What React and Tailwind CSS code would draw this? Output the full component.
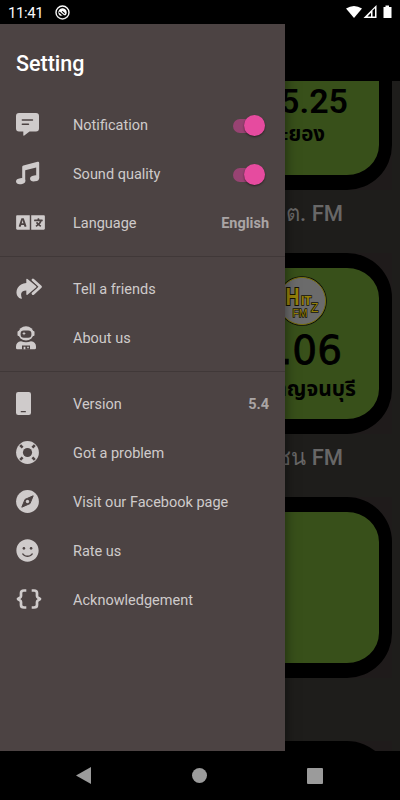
import React from 'react'
import { FaLanguage, FaSmile } from 'react-icons/fa'

const ChatIcon = () => (
  <svg width="23" height="23" viewBox="0 0 23 23" fill="currentColor">
    <path d="M3 0H20Q23 0 23 3V15.500Q23 18.500 20 18.500H13.500L8.300 22.600Q7.300 23.200 7.300 22V18.500H3Q0 18.500 0 15.500V3Q0 0 3 0Z" />
    <path d="M6.300 7H16.500M6.300 11.300H12.500" stroke="#4c4343" strokeWidth="1.400" strokeLinecap="round" />
  </svg>
)

const MusicIcon = () => (
  <svg width="24" height="24" viewBox="0 0 24 24" fill="currentColor" className="-mt-0.5">
    <path d="M6.200 6Q6.200 4.800 7.400 4.500L21.600 .700Q23.200 .400 23.200 1.900V17H20.200V6.400L9.200 9.300V19.800H6.200Z" />
    <ellipse cx="4.700" cy="20.200" rx="4.700" ry="3" transform="rotate(-8 4.700 20.200)" />
    <ellipse cx="18.600" cy="17.400" rx="4.600" ry="3" transform="rotate(-8 18.600 17.400)" />
  </svg>
)

const ShareIcon = () => (
  <svg width="27" height="22" viewBox="0 0 27 22" fill="currentColor">
    <path d="M17 2L24.500 8.700L17 15.600" fill="none" stroke="currentColor" strokeWidth="2.800" strokeLinejoin="round" strokeLinecap="round" />
    <path
      d="M10.300 1.300Q10.500 .200 11.500 .900L20 8Q20.900 8.800 20 9.600L11.500 16.700Q10.500 17.300 10.300 16.300V12.600Q6 12.800 5.200 15.600Q4.800 17.800 6 20.600Q3.500 21.300 1.400 17.900Q-.600 14 1.600 9.900Q4.300 5.600 10.300 5.100Z"
      stroke="#4c4343"
      strokeWidth="2"
      paintOrder="stroke"
    />
  </svg>
)

const AstronautIcon = () => (
  <svg width="20" height="24" viewBox="0 0 20 24" fill="currentColor">
    <ellipse cx="10" cy="7.400" rx="7.600" ry="7.200" />
    <rect x="1.500" y="5" width="17" height="5" rx="1" />
    <rect x="4.600" y="4.600" width="10.800" height="7.200" rx="3.200" fill="#4c4343" />
    <path d="M8 5.600L8.600 7L10 7.500L8.600 8.100L8 9.500L7.400 8.100L6 7.500L7.400 7Z" />
    <path d="M5 15.300Q10 17.300 15 15.300Q20 16 20 20.500V22Q20 23.300 18.600 23.300H1.400Q0 23.300 0 22V20.500Q0 16 5 15.300Z" />
    <path d="M6 23.500V19.500H14V23.500Z" fill="#4c4343" />
    <path d="M7.600 20.800H9.400V23.300H7.600ZM11.200 20.800H12.800V22.300H11.200Z" />
  </svg>
)

const PhoneIcon = () => (
  <svg width="15" height="23" viewBox="0 0 15 23">
    <rect width="15" height="23" rx="2.200" fill="currentColor" />
    <path d="M5.300 19.700H9.300" stroke="#4c4343" strokeWidth="1.300" strokeLinecap="round" />
  </svg>
)

const LifeRingIcon = () => (
  <svg width="23" height="23" viewBox="0 0 23 23">
    <circle cx="11.500" cy="11.500" r="11.400" fill="currentColor" />
    <circle cx="11.500" cy="11.500" r="4.600" fill="#4c4343" />
    <path d="M6.600 6.600L4.200 4.200M16.400 6.600L18.800 4.200M6.600 16.400L4.200 18.800M16.400 16.400L18.800 18.800" stroke="#4c4343" strokeWidth="2.600" />
  </svg>
)

const CompassIcon = () => (
  <svg width="23" height="23" viewBox="0 0 23 23">
    <circle cx="11.500" cy="11.500" r="11.400" fill="currentColor" />
    <path d="M17.200 5.800L14 13.600L5.800 17.200L9 9.400Z" fill="#4c4343" stroke="#4c4343" strokeLinejoin="round" />
    <circle cx="11.500" cy="11.500" r="1.700" fill="currentColor" />
  </svg>
)

const BracesIcon = () => (
  <svg width="26" height="20" viewBox="0 0 26 20" fill="none" stroke="currentColor" strokeWidth="2.700" strokeLinejoin="round" className="-mt-px">
    <path d="M10.300 1.500H8Q5 1.500 5 4V7Q5 8 4 8.700L2 10L4 11.300Q5 12 5 13V16Q5 18.500 8 18.500H10.300" />
    <path d="M15.700 1.500H18Q21 1.500 21 4V7Q21 8 22 8.700L24 10L22 11.300Q21 12 21 13V16Q21 18.500 18 18.500H15.700" />
  </svg>
)

const HitzLogo = () => (
  <svg width="50" height="50" viewBox="0 0 50 50" className="shrink-0" fontFamily="Liberation Sans, sans-serif" fontWeight="700">
    <circle cx="25" cy="25" r="24.800" fill="#0b0b0b" />
    <circle cx="25" cy="25" r="23.600" fill="#6b6b6b" stroke="#77700c" strokeWidth="1" />
    <g fill="#94800a" stroke="#151304" strokeWidth="1.400" paintOrder="stroke">
      <text x="8.500" y="28.800" fontSize="24" textLength="14" lengthAdjust="spacingAndGlyphs" strokeWidth="2.200">H</text>
      <text x="24" y="29" fontSize="13" textLength="10.500" lengthAdjust="spacingAndGlyphs">IT</text>
      <text x="34" y="36" fontSize="12" fontWeight="400">Z</text>
      <text x="15.500" y="41" fontSize="11.500" fontWeight="400" textLength="15" lengthAdjust="spacingAndGlyphs">FM</text>
    </g>
  </svg>
)

const sections = [
  [
    { icon: <ChatIcon />, label: 'Notification', toggle: true },
    { icon: <MusicIcon />, label: 'Sound quality', toggle: true },
    { icon: <FaLanguage className="h-[23px] w-[29px]" />, label: 'Language', value: 'English' },
  ],
  [
    { icon: <ShareIcon />, label: 'Tell a friends' },
    { icon: <AstronautIcon />, label: 'About us' },
  ],
  [
    { icon: <PhoneIcon />, label: 'Version', value: '5.4' },
    { icon: <LifeRingIcon />, label: 'Got a problem' },
    { icon: <CompassIcon />, label: 'Visit our Facebook page' },
    { icon: <FaSmile className="size-[23px]" />, label: 'Rate us' },
    { icon: <BracesIcon />, label: 'Acknowledgement' },
  ],
]

const Toggle = () => (
  <div className="mr-1 flex h-3.5 w-8 items-center justify-end rounded-full bg-[#974372]">
    <div className="size-[21px] shrink-0 rounded-full bg-[#e64b9f] shadow-[0_1px_2px_rgba(0,0,0,0.5)]" />
  </div>
)

const MenuRow = ({ icon, label, value, toggle }) => (
  <li className="flex h-[49px] items-center pr-4 pl-4 text-[#cfcbcb]">
    <span className="flex w-[57px] shrink-0 items-center pb-0.5">{icon}</span>
    <span className="flex-1 pt-px text-[14.5px] whitespace-nowrap">{label}</span>
    {value && <span className="pt-px text-[14.5px] font-bold text-[#aaa5a5]">{value}</span>}
    {toggle && <Toggle />}
  </li>
)

const StationCard = ({ label, children }) => (
  <div className="h-[244px] w-[181px] shrink-0">
    <div className="bg-[#1f1b1b]">
      <div className="flex h-[181px] flex-col items-end overflow-hidden rounded-[45px] border-x-[13px] border-y-[15px] border-black bg-[#38501a] font-['Noto_Sans','Noto_Sans_Thai',sans-serif] text-black">
        {children}
      </div>
    </div>
    {label && (
      <p className="pt-[11px] pr-[49px] text-right text-[22px] leading-[26px] font-medium whitespace-nowrap text-[#686767]">
        {label}
      </p>
    )}
  </div>
)

const App = () => (
  <div className="relative flex h-[800px] w-[400px] flex-col overflow-hidden bg-black font-[Roboto,sans-serif]">
    {/* Status bar */}
    <header className="flex h-6 shrink-0 items-center justify-between pr-2 pl-2 text-white">
      <div className="flex items-center gap-3">
        <span className="w-[35px] pt-0.5 text-[15px] leading-5 tracking-[-0.4px]">11:41</span>
        <svg width="15" height="15" viewBox="0 0 15 15" fill="none" stroke="white">
          <circle cx="7.500" cy="7.500" r="6.500" strokeWidth="1.400" />
          <path d="M5 10.800A4.200 4.200 0 1 1 10.600 10.300Z" fill="white" stroke="none" />
          <path d="M4.300 7L9.500 11.500M7.200 6.400L9.800 8.600" stroke="black" strokeWidth="1.200" />
        </svg>
      </div>
      <svg width="46" height="14" viewBox="0 0 46 14" fill="white">
        <path d="M0 3.500Q8 -1.700 16 3.500L8 13Z" />
        <path d="M17.500 13L30.500 0V13Z" />
        <path d="M21.500 11.500L25 7.800V11.500ZM26.500 5.500L29 3.200V11.500H26.500Z" fill="black" />
        <path d="M37.500 2H39.500V.500H43V2H45.500V13H37.500Z" />
      </svg>
    </header>

    <div className="h-[57px] shrink-0 bg-black" />

    {/* Station list behind the drawer */}
    <main className="flex min-h-0 flex-1 flex-col items-end overflow-hidden bg-[#1e1d1b] pr-2">
      <div className="-mt-[72px] flex flex-col">
        <StationCard label="ฅต. FM">
          <p className="pt-[55px] pr-[31px] font-[Roboto,sans-serif] text-[34px] leading-[44px] font-semibold">105.25</p>
          <p className="pr-[54px] text-[20.5px] leading-5 font-bold">ระยอง</p>
        </StationCard>
        <StationCard label="มวลชน FM">
          <div className="pt-2 pr-[52px]">
            <HitzLogo />
          </div>
          <p className="pt-0.5 pr-[37px] font-['DejaVu_Sans',sans-serif] text-[39px] leading-[46px] font-medium [-webkit-text-stroke:0.8px_black]">91.06</p>
          <p className="pr-[23px] text-[21px] leading-7 font-bold">กาญจนบุรี</p>
        </StationCard>
        <StationCard />
        <StationCard />
      </div>
    </main>

    {/* Android navigation bar */}
    <footer className="flex h-[49px] shrink-0 items-center justify-between bg-black pr-[77px] pl-[76px]">
      <svg width="15" height="17" viewBox="0 0 15 17" fill="#9b9b9b">
        <path d="M0 8.500L15 0V17Z" />
      </svg>
      <div className="size-[15px] rounded-full bg-[#9b9b9b]" />
      <div className="size-4 rounded-[1px] bg-[#9b9b9b]" />
    </footer>

    {/* Settings drawer */}
    <aside className="absolute top-6 bottom-[49px] left-0 w-[285px] bg-[#4c4343] shadow-[0_0_12px_rgba(0,0,0,0.5)]">
      <h1 className="h-[77px] px-4 pt-[26px] text-[21.5px] leading-7 font-medium text-white">Setting</h1>
      {sections.map((items, index) => (
        <ul key={index} className="border-b border-[#403838] pb-2 last:border-b-0 not-first-of-type:pt-2">
          {items.map((item) => (
            <MenuRow key={item.label} {...item} />
          ))}
        </ul>
      ))}
    </aside>
  </div>
)

export default App
